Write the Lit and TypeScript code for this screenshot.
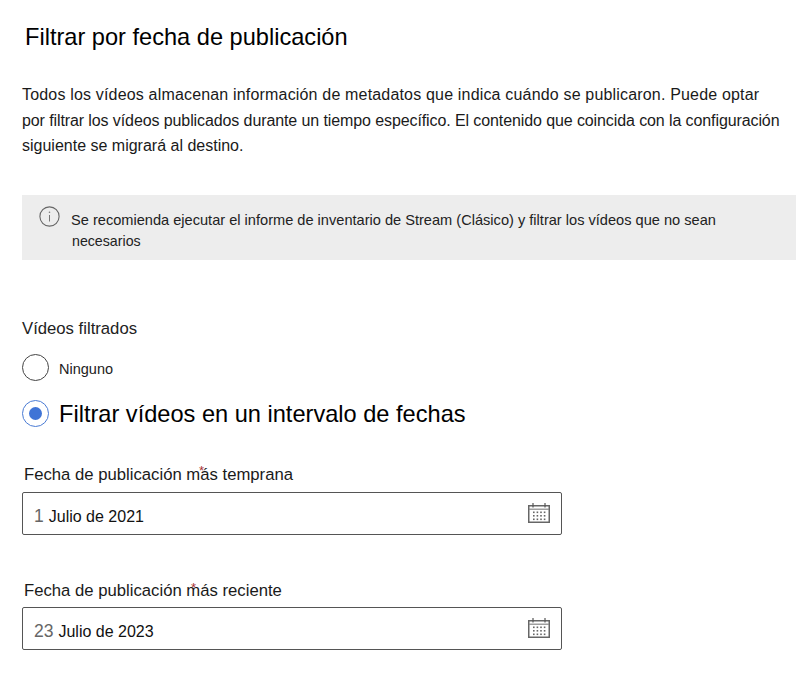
import { LitElement, html, css, svg } from "lit";
import { customElement } from "lit/decorators.js";

const dots = [0, 1, 2, 3].flatMap((c) =>
  [0, 1, 2].map((r) => svg`<rect x=${5 + c * 3.6} y=${8.5 + r * 3.5} width="1.6" height="1.6" fill="#666"></rect>`)
);

const calendar = html`<svg class="cal" width="22" height="20" viewBox="0 0 22 20" fill="none">
  <rect x="0.75" y="2.75" width="20.5" height="16.5" stroke="#666" stroke-width="1.5"></rect>
  <line x1="1" y1="6.2" x2="21" y2="6.2" stroke="#888" stroke-width="1.2"></line>
  <line x1="5" y1="0" x2="5" y2="4.5" stroke="#555" stroke-width="1.2"></line>
  <line x1="17" y1="0" x2="17" y2="4.5" stroke="#555" stroke-width="1.2"></line>
  ${dots}
</svg>`;

@customElement("app-root")
export class AppRoot extends LitElement {
  static styles = css`
    :host {
      display: block;
      width: 812px;
      height: 700px;
      box-sizing: border-box;
      padding: 24px 16px 0 22px;
      background: #fff;
      color: #111;
      font-family: "Liberation Sans", Arial, sans-serif;
      overflow: hidden;
    }
    h1 {
      margin: 0 0 0 3px;
      font-size: 23.6px;
      line-height: 26px;
      font-weight: 400;
      color: #000;
    }
    .intro {
      margin: 32px 0 0;
      font-size: 16px;
      line-height: 25.5px;
      color: #1a1a1a;
      white-space: nowrap;
    }
    .l1 {
      letter-spacing: 0.175px;
    }
    .l2 {
      letter-spacing: -0.1px;
    }
    .note {
      margin-top: 36px;
      height: 65px;
      box-sizing: border-box;
      background: #ededed;
      display: flex;
      gap: 11px;
      padding: 11px 0 0 17px;
    }
    .note svg {
      flex: none;
    }
    .note p {
      margin: 4px 0 0;
      font-size: 14.6px;
      line-height: 21.5px;
      color: #222;
      white-space: nowrap;
    }
    .note .sub {
      font-size: 14.2px;
      margin-left: 1px;
    }
    .legend {
      margin-top: 59px;
      font-size: 16.7px;
      line-height: 20px;
      color: #222;
    }
    .radio {
      display: flex;
      align-items: center;
      gap: 10px;
      height: 27px;
    }
    .radio.none {
      margin-top: 15px;
      font-size: 14.5px;
      color: #222;
    }
    .radio.none .text {
      padding-top: 4px;
    }
    .radio.on {
      margin-top: 19px;
      font-size: 23.6px;
      color: #000;
    }
    .radio.on .text {
      padding-top: 2px;
    }
    .dot {
      width: 27px;
      height: 27px;
      box-sizing: border-box;
      border-radius: 50%;
      border: 1.3px solid #444;
      display: flex;
      align-items: center;
      justify-content: center;
      flex: none;
    }
    .on .dot {
      border-color: #4a7bd4;
    }
    .on .dot::after {
      content: "";
      width: 13px;
      height: 13px;
      border-radius: 50%;
      background: #3f74d6;
    }
    .field {
      margin-top: 38px;
    }
    .field + .field {
      margin-top: 45px;
    }
    label {
      display: block;
      position: relative;
      margin-left: 2px;
      font-size: 16.7px;
      line-height: 20px;
      color: #1a1a1a;
    }
    .field + .field label {
      top: 1px;
    }
    .star {
      position: absolute;
      color: #a33;
      font-size: 13px;
      line-height: 12px;
    }
    .box {
      margin-top: 7px;
      width: 540px;
      height: 43px;
      box-sizing: border-box;
      border: 1px solid #555;
      border-radius: 2px;
      display: flex;
      align-items: center;
      padding: 0 11px 0 11px;
      font-size: 16px;
      color: #111;
    }
    .value {
      padding-top: 7px;
    }
    .day {
      color: #666;
      font-size: 17.5px;
      margin-right: 5px;
    }
    .cal {
      margin-left: auto;
    }
  `;

  render() {
    return html`
      <h1>Filtrar por fecha de publicación</h1>
      <p class="intro">
        <span class="l1">Todos los vídeos almacenan información de metadatos que indica cuándo se publicaron. Puede optar</span><br />
        <span class="l2">por filtrar los vídeos publicados durante un tiempo específico. El contenido que coincida con la configuración</span><br />
        siguiente se migrará al destino.
      </p>
      <div class="note">
        <svg width="21" height="21" viewBox="0 0 21 21" fill="none">
          <circle cx="10.5" cy="10.5" r="9.6" stroke="#666" stroke-width="1.1"></circle>
          <line x1="10.5" y1="9" x2="10.5" y2="15.5" stroke="#777" stroke-width="1"></line>
          <circle cx="10.5" cy="6.3" r="0.8" fill="#777"></circle>
        </svg>
        <p>
          Se recomienda ejecutar el informe de inventario de Stream (Clásico) y filtrar los vídeos que no sean<br />
          <span class="sub">necesarios</span>
        </p>
      </div>
      <div class="legend">Vídeos filtrados</div>
      <div class="radio none"><span class="dot"></span><span class="text">Ninguno</span></div>
      <div class="radio on"><span class="dot"></span><span class="text">Filtrar vídeos en un intervalo de fechas</span></div>
      <div class="field">
        <label>Fecha de publicación más temprana<span class="star" style="left:175px;top:0">*</span></label>
        <div class="box"><span class="value"><span class="day">1</span>Julio de 2021</span>${calendar}</div>
      </div>
      <div class="field">
        <label>Fecha de publicación más reciente<span class="star" style="left:167px;top:1px">*</span></label>
        <div class="box"><span class="value"><span class="day">23</span>Julio de 2023</span>${calendar}</div>
      </div>
    `;
  }
}
